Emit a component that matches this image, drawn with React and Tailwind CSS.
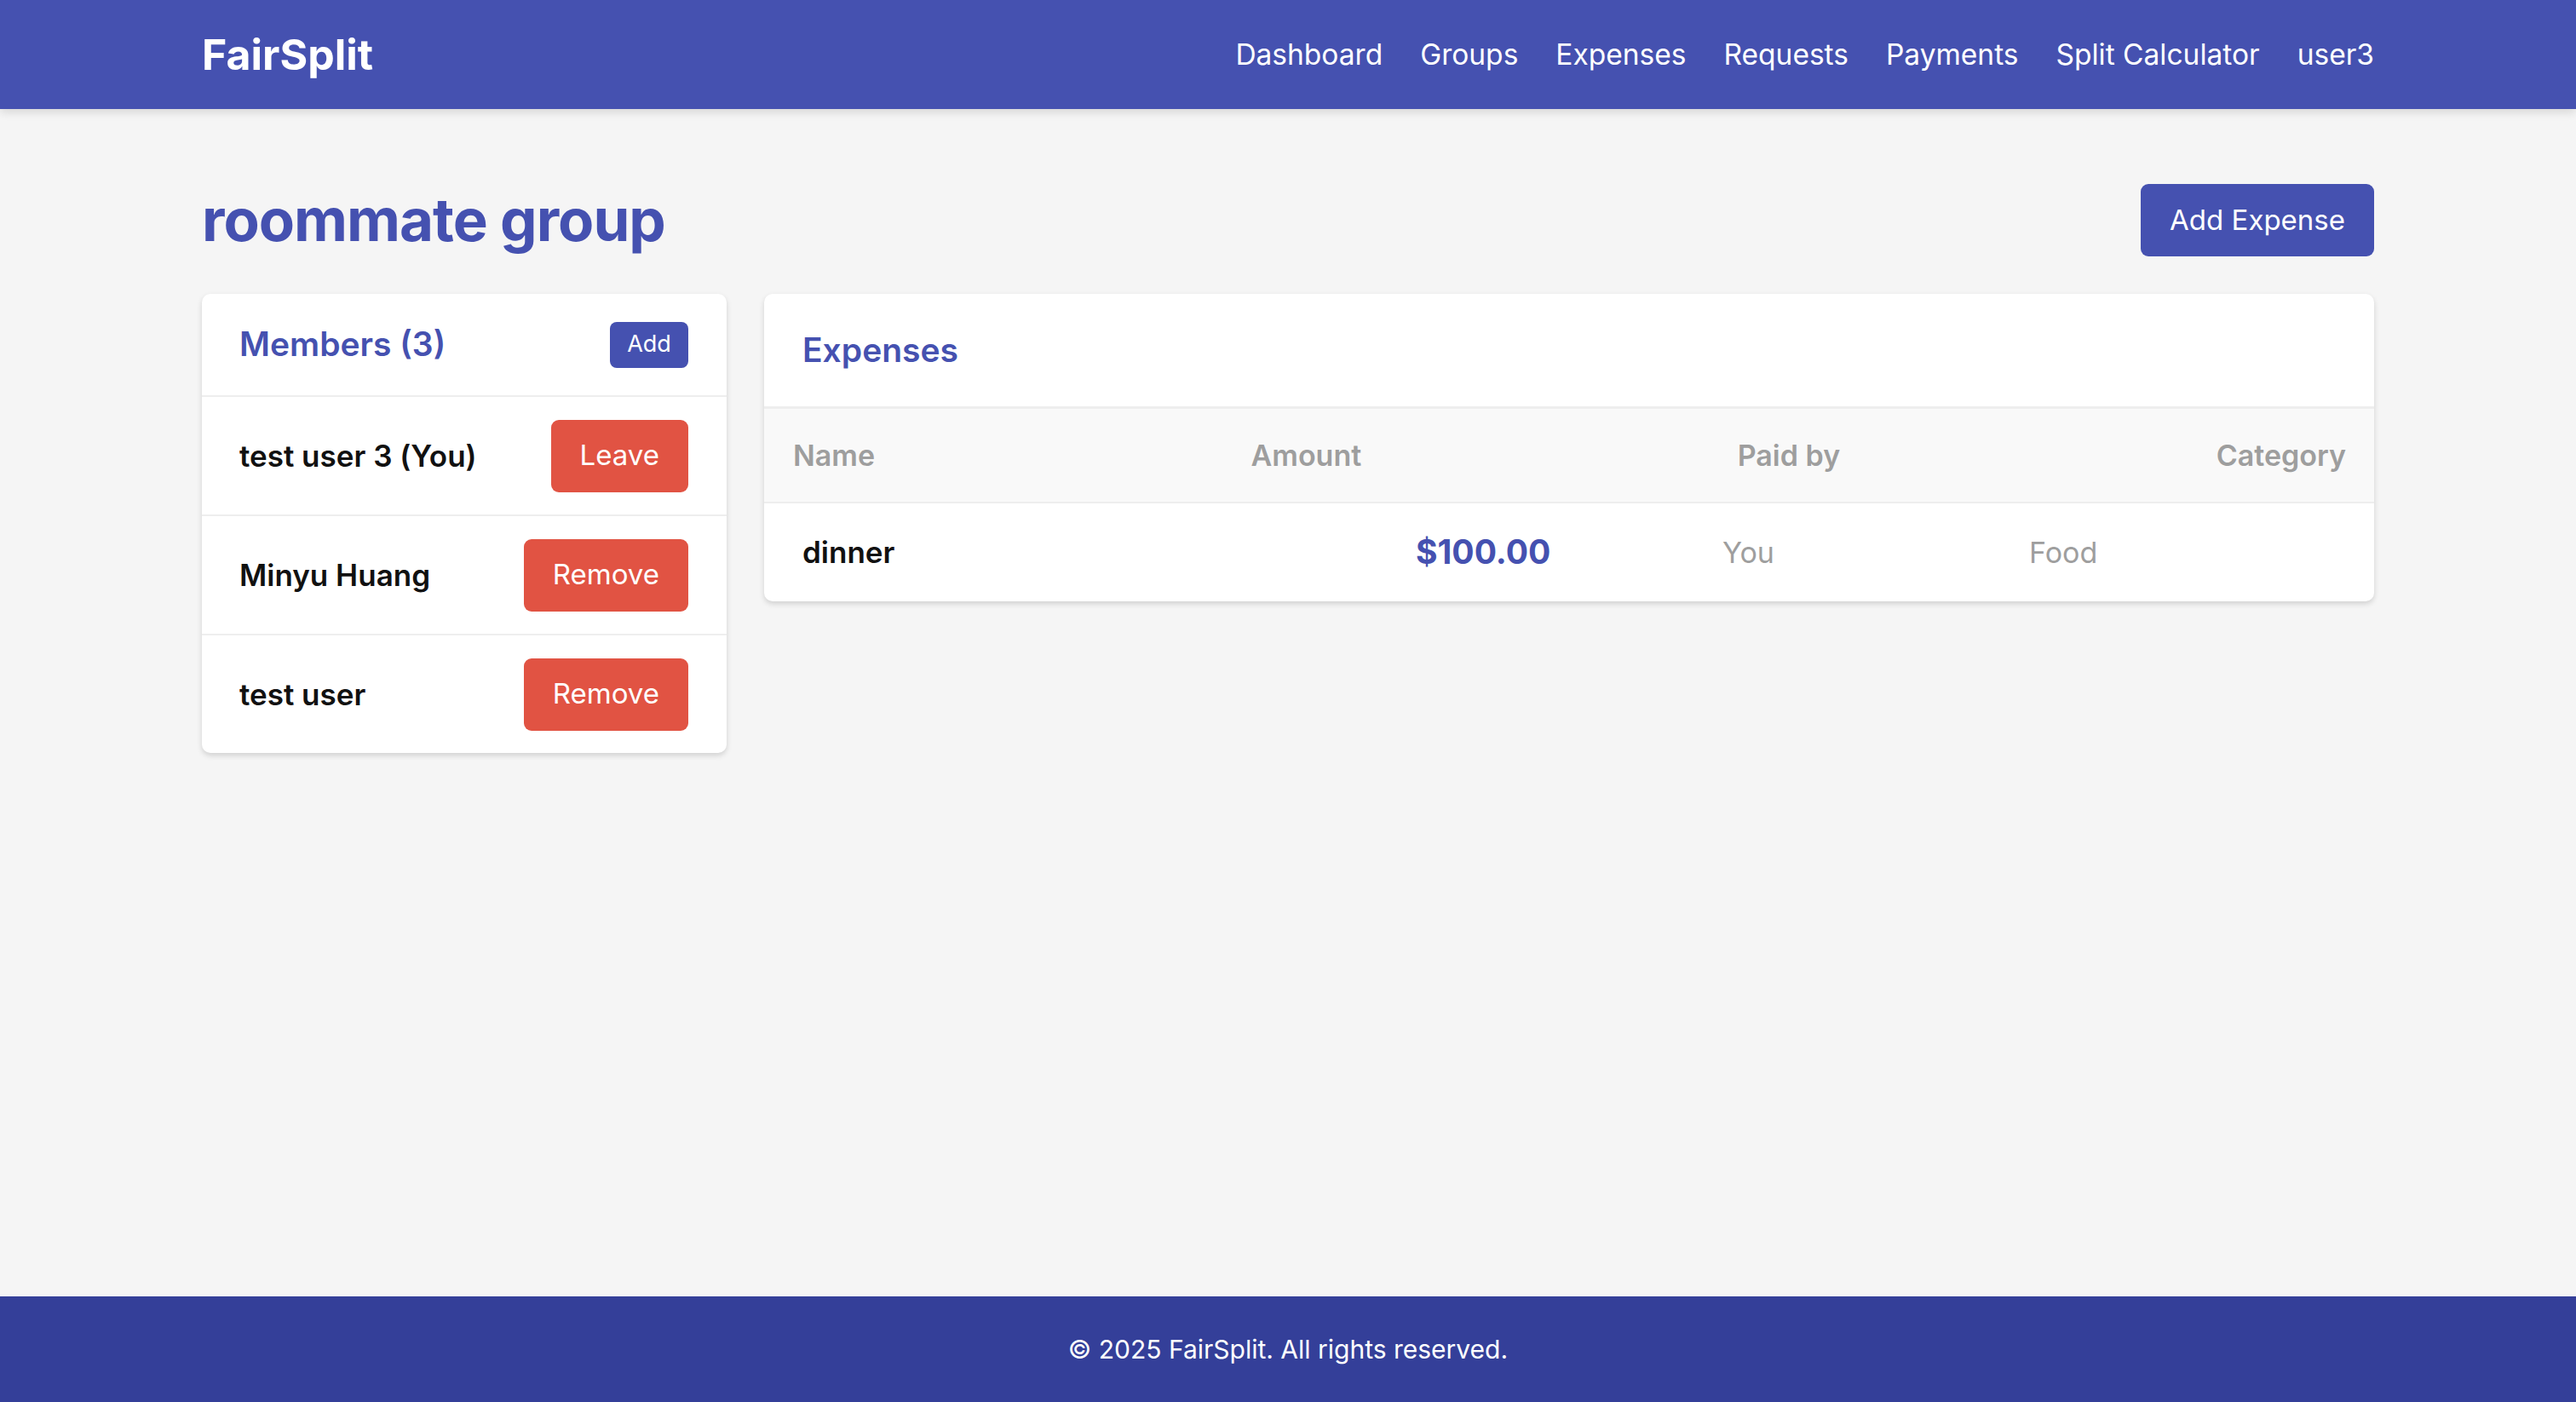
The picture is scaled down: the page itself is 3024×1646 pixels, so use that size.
import React from "react";

const navLinks = ["Dashboard", "Groups", "Expenses", "Requests", "Payments", "Split Calculator", "user3"];

const members = [
  { name: "test user 3 (You)", action: "Leave" },
  { name: "Minyu Huang", action: "Remove" },
  { name: "test user", action: "Remove" },
];

const App = () => {
  return (
    <div className="min-h-screen flex flex-col bg-[#f5f5f5] font-['Inter',sans-serif]">
      <nav className="relative z-10 h-[128px] bg-[#4551b0] shadow-[0_4px_10px_rgba(0,0,0,0.12)]">
        <div className="w-[2550px] mx-auto h-full flex items-center justify-between">
          <span className="text-[50px] font-bold text-white">FairSplit</span>
          <div className="flex items-center gap-[44px] text-[33.5px] text-white">
            {navLinks.map((link) => (
              <span key={link}>{link}</span>
            ))}
          </div>
        </div>
      </nav>

      <main className="flex-1">
        <div className="w-[2550px] mx-auto pt-[88px]">
          <div className="flex items-center justify-between h-[85px]">
            <h1 className="text-[69px] font-bold text-[#4551b0] tracking-[-1px] leading-none">roommate group</h1>
            <button className="h-[85px] px-[34px] rounded-[9px] bg-[#4551b0] text-white text-[33px]">Add Expense</button>
          </div>

          <div className="mt-[44px] flex items-start gap-[44px]">
            {/* members */}
            <div className="w-[616px] bg-white rounded-[10px] shadow-[0_3px_6px_rgba(0,0,0,0.15)]">
              <div className="h-[121px] pl-[44px] pr-[45px] flex items-center justify-between border-b-2 border-[#eeeeee]">
                <h2 className="text-[39px] font-semibold text-[#4551b0]">Members (3)</h2>
                <button className="h-[54px] w-[92px] rounded-[8px] bg-[#4551b0] text-white text-[27px]">Add</button>
              </div>
              {members.map((m, i) => (
                <div
                  key={m.name}
                  className={
                    i < members.length - 1
                      ? "h-[140px] pl-[44px] pr-[45px] flex items-center justify-between border-b-2 border-[#eeeeee]"
                      : "h-[138px] pl-[44px] pr-[45px] flex items-center justify-between"
                  }
                >
                  <span className="text-[35px] font-semibold text-[#111111]">{m.name}</span>
                  <button className="h-[85px] px-[34px] rounded-[9px] bg-[#e15343] text-white text-[33px]">{m.action}</button>
                </div>
              ))}
            </div>

            {/* expenses */}
            <div className="flex-1 bg-white rounded-[10px] shadow-[0_3px_6px_rgba(0,0,0,0.15)] overflow-hidden">
              <div className="h-[135px] px-[45px] flex items-center border-b-[3px] border-[#eeeeee]">
                <h2 className="text-[39px] font-semibold text-[#4551b0]">Expenses</h2>
              </div>
              <div className="h-[111px] pl-[34px] pr-[33px] flex items-center justify-between bg-[#f9f9f9] border-b-2 border-[#eeeeee] text-[34px] font-semibold text-[#9e9e9e]">
                <span>Name</span>
                <span>Amount</span>
                <span>Paid by</span>
                <span>Category</span>
              </div>
              <div className="h-[115px] px-[45px] grid grid-cols-[2fr_1fr_1fr_1fr] items-center">
                <span className="text-[35px] font-semibold text-[#111111]">dinner</span>
                <span className="text-[39px] font-bold text-[#4551b0]">$100.00</span>
                <span className="text-[34px] text-[#9e9e9e]">You</span>
                <span className="text-[34px] text-[#9e9e9e]">Food</span>
              </div>
            </div>
          </div>
        </div>
      </main>

      <footer className="h-[124px] bg-[#343f99] flex items-center justify-center text-[30px] text-white">
        © 2025 FairSplit. All rights reserved.
      </footer>
    </div>
  );
};

export default App;
